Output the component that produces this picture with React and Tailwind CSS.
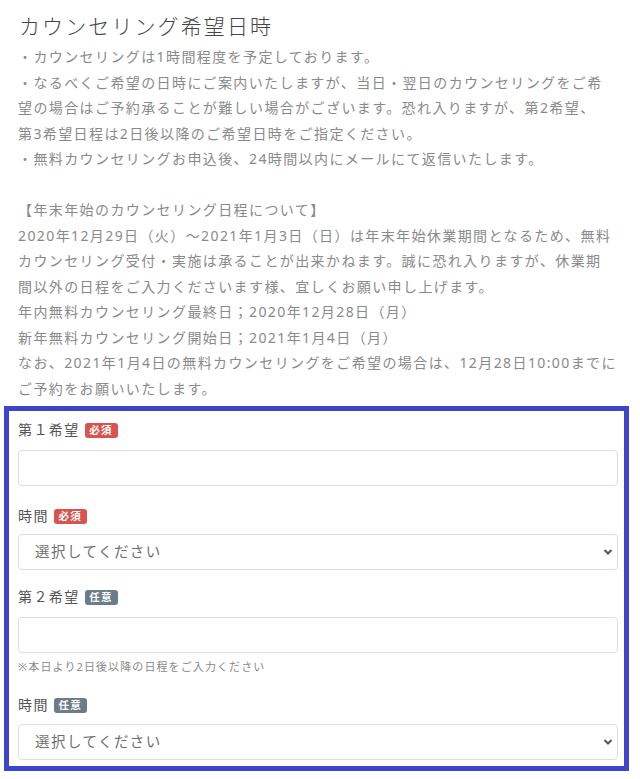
import React from 'react';

const font = 'font-["Noto_Sans","Noto_Sans_CJK_JP",sans-serif]';

const Badge = ({ type }) => (
  <span
    className={`ml-[5px] inline-flex h-[15px] w-[33px] items-center justify-center rounded-[3px] text-[10.5px] font-bold leading-none text-white ${
      type === 'required' ? 'bg-[#d9534f]' : 'bg-[#6c7d8a]'
    }`}
  >
    {type === 'required' ? '必須' : '任意'}
  </span>
);

const Label = ({ text, type }) => (
  <div className="flex h-[24px] items-center text-[14px] leading-[24px] tracking-[0.1em] text-[#555]">
    <span>{text}</span>
    <Badge type={type} />
  </div>
);

const TextInput = () => (
  <input
    type="text"
    className="block h-[36px] w-full rounded-[4px] border border-[#dedede] bg-white px-4 text-[14px] outline-none"
  />
);

const Select = () => (
  <div className="relative">
    <select className="block h-[36px] w-full appearance-none rounded-[4px] border border-[#dedede] bg-white pl-4 text-[14.5px] tracking-[0.1em] text-[#6f6f6f] outline-none">
      <option>選択してください</option>
    </select>
    <svg
      className="pointer-events-none absolute right-[5px] top-1/2 -translate-y-1/2"
      width="10"
      height="7"
      viewBox="0 0 10 7"
    >
      <path d="M1.5 1.5 L5 5 L8.5 1.5" fill="none" stroke="#4a5864" strokeWidth="2" />
    </svg>
  </div>
);

export default function App() {
  return (
    <div className={`w-[640px] bg-white pb-[8px] ${font}`}>
      {/* Intro */}
      <div className="pl-[18px] pt-[10px]">
        <h2 className="pl-[1px] text-[21px] font-light leading-[32px] tracking-[0.1em] text-[#454545]">
          カウンセリング希望日時
        </h2>
        <p className="mt-[2px] whitespace-nowrap text-[14px] leading-[25.5px] tracking-[0.1em] text-[#8a8a8a]">
          ・カウンセリングは1時間程度を予定しております。
          <br />
          ・なるべくご希望の日時にご案内いたしますが、当日・翌日のカウンセリングをご希
          <br />
          望の場合はご予約承ることが難しい場合がございます。恐れ入りますが、第2希望、
          <br />
          第3希望日程は2日後以降のご希望日時をご指定ください。
          <br />
          ・無料カウンセリングお申込後、24時間以内にメールにて返信いたします。
          <br />
          <br />
          【年末年始のカウンセリング日程について】
          <br />
          2020年12月29日（火）～2021年1月3日（日）は年末年始休業期間となるため、無料
          <br />
          カウンセリング受付・実施は承ることが出来かねます。誠に恐れ入りますが、休業期
          <br />
          間以外の日程をご入力くださいます様、宜しくお願い申し上げます。
          <br />
          年内無料カウンセリング最終日；2020年12月28日（月）
          <br />
          新年無料カウンセリング開始日；2021年1月4日（月）
          <br />
          なお、2021年1月4日の無料カウンセリングをご希望の場合は、12月28日10:00までに
          <br />
          ご予約をお願いいたします。
        </p>
      </div>

      {/* Form */}
      <div className="ml-[4px] mt-[5px] w-[625px] border-[5px] border-[#3e45cc] pb-[6px] pl-[9px] pr-[6px] pt-[7px]">
        <Label text="第１希望" type="required" />
        <div className="mt-[8px]">
          <TextInput />
        </div>

        <div className="mt-[18px]">
          <Label text="時間" type="required" />
        </div>
        <div className="mt-[6px]">
          <Select />
        </div>

        <div className="mt-[15px]">
          <Label text="第２希望" type="optional" />
        </div>
        <div className="mt-[8px]">
          <TextInput />
        </div>
        <p className="mt-[6px] text-[11px] leading-[16px] tracking-[0.1em] text-[#8a8a8a]">
          ※本日より2日後以降の日程をご入力ください
        </p>

        <div className="mt-[18px]">
          <Label text="時間" type="optional" />
        </div>
        <div className="mt-[7px]">
          <Select />
        </div>
      </div>
    </div>
  );
}
